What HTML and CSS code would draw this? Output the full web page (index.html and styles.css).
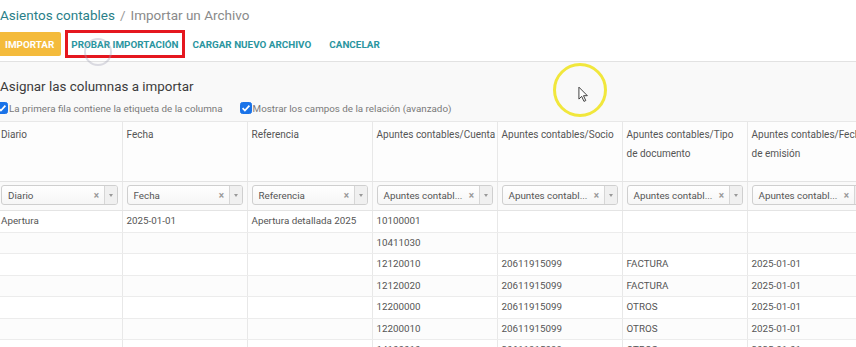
FILE: index.html
```html
<!DOCTYPE html>
<html lang="es">
<head>
<meta charset="utf-8">
<title>Importar un Archivo</title>
<link rel="stylesheet" href="styles.css">
</head>
<body>
<div class="page">
  <header class="control-panel">
    <div class="breadcrumb"><span class="crumb-link">Asientos contables</span><span class="crumb-sep">/</span><span class="crumb-current">Importar un Archivo</span></div>
    <div class="buttons">
      <button class="btn btn-primary">IMPORTAR</button>
      <button class="btn btn-link btn-marked">PROBAR IMPORTACIÓN</button>
      <button class="btn btn-link">CARGAR NUEVO ARCHIVO</button>
      <button class="btn btn-link">CANCELAR</button>
    </div>
  </header>
  <main class="content">
    <h2 class="title">Asignar las columnas a importar</h2>
    <div class="options">
      <label class="opt"><span class="cb"><svg viewBox="0 0 12 12" width="12" height="12"><rect x="0.5" y="0.5" width="11" height="11" rx="2" fill="#1a73e8" stroke="#1a73e8"/><path d="M2.6 6.2 L4.9 8.5 L9.4 3.6" fill="none" stroke="#fff" stroke-width="1.7"/></svg></span>La primera fila contiene la etiqueta de la columna</label>
      <label class="opt opt-2"><span class="cb"><svg viewBox="0 0 12 12" width="12" height="12"><rect x="0.5" y="0.5" width="11" height="11" rx="2" fill="#1a73e8" stroke="#1a73e8"/><path d="M2.6 6.2 L4.9 8.5 L9.4 3.6" fill="none" stroke="#fff" stroke-width="1.7"/></svg></span>Mostrar los campos de la relación (avanzado)</label>
    </div>
    <table class="grid">
      <thead>
        <tr class="head-labels">
          <th>Diario</th>
          <th>Fecha</th>
          <th>Referencia</th>
          <th class="nowrap">Apuntes contables/Cuenta</th>
          <th class="nowrap">Apuntes contables/Socio</th>
          <th>Apuntes contables/Tipo de documento</th>
          <th>Apuntes contables/Fecha de emisión</th>
        </tr>
        <tr class="head-selects">
          <th><div class="sel"><span class="sel-text">Diario</span><span class="sel-x">×</span><span class="sel-arrow"></span></div></th>
          <th><div class="sel"><span class="sel-text">Fecha</span><span class="sel-x">×</span><span class="sel-arrow"></span></div></th>
          <th><div class="sel"><span class="sel-text">Referencia</span><span class="sel-x">×</span><span class="sel-arrow"></span></div></th>
          <th><div class="sel"><span class="sel-text">Apuntes contabl...</span><span class="sel-x">×</span><span class="sel-arrow"></span></div></th>
          <th><div class="sel"><span class="sel-text">Apuntes contabl...</span><span class="sel-x">×</span><span class="sel-arrow"></span></div></th>
          <th><div class="sel"><span class="sel-text">Apuntes contabl...</span><span class="sel-x">×</span><span class="sel-arrow"></span></div></th>
          <th><div class="sel"><span class="sel-text">Apuntes contabl...</span><span class="sel-x">×</span><span class="sel-arrow"></span></div></th>
        </tr>
      </thead>
      <tbody>
        <tr><td>Apertura</td><td>2025-01-01</td><td>Apertura detallada 2025</td><td>10100001</td><td></td><td></td><td></td></tr>
        <tr><td></td><td></td><td></td><td>10411030</td><td></td><td></td><td></td></tr>
        <tr><td></td><td></td><td></td><td>12120010</td><td>20611915099</td><td>FACTURA</td><td>2025-01-01</td></tr>
        <tr><td></td><td></td><td></td><td>12120020</td><td>20611915099</td><td>FACTURA</td><td>2025-01-01</td></tr>
        <tr><td></td><td></td><td></td><td>12200000</td><td>20611915099</td><td>OTROS</td><td>2025-01-01</td></tr>
        <tr><td></td><td></td><td></td><td>12200010</td><td>20611915099</td><td>OTROS</td><td>2025-01-01</td></tr>
        <tr><td></td><td></td><td></td><td>14100010</td><td>20611915099</td><td>OTROS</td><td>2025-01-01</td></tr>
      </tbody>
    </table>
  </main>
  <div class="click-ring"></div>
  <div class="cursor-ring"></div>
  <svg class="cursor" viewBox="0 0 12 18" width="11" height="17"><path d="M1 1 L1 14 L4 11 L6.5 16.5 L8.5 15.6 L6 10.3 L10.2 10.3 Z" fill="#fff" stroke="#333" stroke-width="1" stroke-linejoin="round"/></svg>
</div>
</body>
</html>
```
FILE: styles.css
```css
html, body {
  margin: 0;
  padding: 0;
}
body {
  width: 856px;
  height: 347px;
  overflow: hidden;
  background: #f9f9f9;
  font-family: Roboto, "Liberation Sans", sans-serif;
  color: #555;
}
.page {
  position: relative;
  margin-left: -4px;
  width: 880px;
}
.control-panel {
  background: #fff;
  border-bottom: 1px solid #e2e2e2;
  height: 62px;
  box-sizing: border-box;
  padding-top: 5px;
}
.breadcrumb {
  font-size: 13.5px;
  line-height: 20px;
  padding-left: 4px;
  white-space: nowrap;
}
.crumb-link { color: #2a7f89; }
.crumb-sep { color: #999; margin: 0 5px; }
.crumb-current { color: #8a8a8a; }
.buttons {
  display: flex;
  align-items: center;
  margin-top: 7px;
}
.btn {
  font-family: Roboto, "Liberation Sans", sans-serif;
  font-size: 9.9px;
  font-weight: 700;
  height: 24px;
  border: 0;
  border-radius: 2px;
  padding: 0 8px;
  background: transparent;
  cursor: pointer;
  white-space: nowrap;
}
.btn-primary {
  background: #f4bb3c;
  color: #fff;
  padding: 0 7px 0 9px;
}
.btn-link {
  color: #2a95a0;
  margin-left: 2px;
}
.btn-marked {
  outline: 3px solid #e5171f;
  outline-offset: -1px;
  border-radius: 0;
  padding: 0 4px;
  margin-left: 6px;
}
.content {
  padding-top: 15px;
}
.title {
  margin: 0 0 0 4px;
  font-size: 13.4px;
  font-weight: 400;
  color: #3c3c3c;
  line-height: 20px;
}
.options {
  display: flex;
  align-items: center;
  margin-top: 2px;
  height: 18px;
  font-size: 9.8px;
  color: #7a7a7a;
}
.opt {
  display: flex;
  align-items: center;
  white-space: nowrap;
}
.opt-2 { margin-left: 17px; }
.cb {
  display: inline-flex;
  margin-right: 1px;
}
.grid {
  margin-top: 4px;
  border-collapse: collapse;
  table-layout: fixed;
  width: 875px;
  margin-left: 1px;
  font-size: 9.8px;
  color: #555;
}
.grid th, .grid td {
  width: 125px;
  box-sizing: border-box;
  border-left: 1px solid #e8e8e8;
  border-right: 1px solid #e8e8e8;
  text-align: left;
  font-weight: 400;
  vertical-align: top;
}
.grid th:first-child, .grid td:first-child { border-left: 0; }
.head-labels th {
  height: 60px;
  padding: 3px 0 0 4px;
  line-height: 19px;
  font-size: 10px;
  background: #fdfdfd;
  border-top: 1px solid #e8e8e8;
  border-bottom: 1px solid #e4e4e4;
}
.head-labels th.nowrap {
  white-space: nowrap;
  overflow: hidden;
}
.head-selects th {
  padding: 3px 4px 5px;
  background: #fafafa;
  border-bottom: 1px solid #e4e4e4;
}
.sel {
  display: flex;
  align-items: center;
  height: 20px;
  box-sizing: border-box;
  border: 1px solid #cfcfcf;
  border-radius: 3px;
  background: linear-gradient(#fff, #f6f6f6);
  overflow: hidden;
}
.sel-text {
  flex: 1;
  padding-left: 6px;
  color: #555;
  white-space: nowrap;
  overflow: hidden;
}
.sel-x {
  color: #999;
  font-size: 10px;
  font-weight: 700;
  width: 14px;
  text-align: center;
}
.sel-arrow {
  width: 12px;
  align-self: stretch;
  border-left: 1px solid #d6d6d6;
  background: #f0f0f0;
  position: relative;
}
.sel-arrow::after {
  content: "";
  position: absolute;
  left: 4px;
  top: 8px;
  border-left: 2px solid transparent;
  border-right: 2px solid transparent;
  border-top: 3px solid #999;
}
.grid tbody td {
  padding: 0 4px;
  height: 21.5px;
  line-height: 20.5px;
  border-bottom: 1px solid #ececec;
  background: #fff;
  white-space: nowrap;
  overflow: hidden;
  vertical-align: middle;
}
.grid tbody tr:nth-child(even) td { background: #fcfcfc; }
.click-ring {
  position: absolute;
  left: 88px;
  top: 38px;
  width: 28px;
  height: 28px;
  border-radius: 50%;
  border: 2px solid rgba(160, 160, 180, 0.35);
  box-sizing: border-box;
}
.cursor-ring {
  position: absolute;
  left: 557px;
  top: 63px;
  width: 54px;
  height: 54px;
  border-radius: 50%;
  border: 3px solid #f1e73c;
  box-sizing: border-box;
}
.cursor {
  position: absolute;
  left: 582px;
  top: 86px;
}
```
